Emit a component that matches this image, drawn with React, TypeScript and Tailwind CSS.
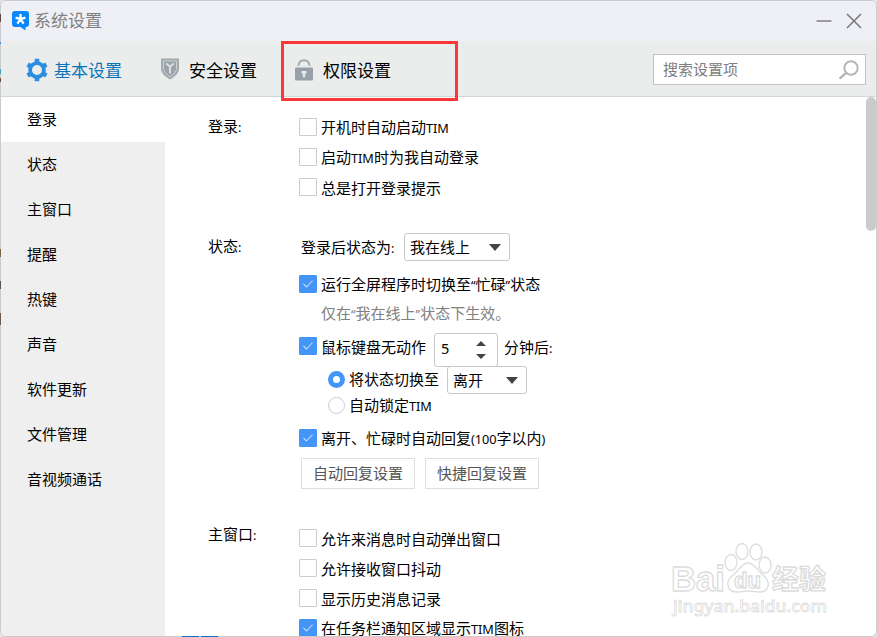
import { useState, type ReactNode } from "react";

const menu = [
  "登录",
  "状态",
  "主窗口",
  "提醒",
  "热键",
  "声音",
  "软件更新",
  "文件管理",
  "音视频通话",
];

// Latin letters, digits and quotes are set smaller than the Chinese text
function En({ children }: { children: ReactNode }) {
  return <span className="font-['Noto_Sans'] text-[12.7px]">{children}</span>;
}

function Check({
  on = false,
  children,
}: {
  on?: boolean;
  children: ReactNode;
}) {
  const [checked, setChecked] = useState(on);

  return (
    <button
      onClick={() => setChecked(!checked)}
      className="flex h-[30px] shrink-0 items-center gap-[4px] whitespace-nowrap text-left"
    >
      <span
        className={`flex h-[18px] w-[18px] items-center justify-center rounded-[1px] border ${
          checked ? "border-[#4495f8] bg-[#4495f8]" : "border-[#c8cdd4] bg-white"
        }`}
      >
        {checked && (
          <svg width="12" height="10" viewBox="0 0 12 10" fill="none">
            <path d="M1.5 5L4.5 8L10.5 1.5" stroke="#c4ddfd" strokeWidth="1.1" />
          </svg>
        )}
      </span>
      <span className="pt-[1px]">{children}</span>
    </button>
  );
}

function Select({ value, className }: { value: string; className: string }) {
  return (
    <button
      className={`flex h-[28px] shrink-0 items-center justify-between rounded-[3px] border border-[#c8c8c8] bg-white pl-[5px] ${className}`}
    >
      <span>{value}</span>
      <svg width="12" height="7" viewBox="0 0 12 7">
        <path d="M0 0H12L6 7Z" fill="#444" />
      </svg>
    </button>
  );
}

function Section({
  title,
  className,
  children,
}: {
  title: string;
  className: string;
  children: ReactNode;
}) {
  return (
    <section className="flex">
      <h3 className={`w-[91px] shrink-0 leading-[30px] ${className}`}>
        {title}
        <En>:</En>
      </h3>
      <div className="flex flex-col items-start">{children}</div>
    </section>
  );
}

export default function App() {
  const [active, setActive] = useState("登录");

  return (
    <div className="relative h-[637px] w-[877px] bg-[#e4e4e4]">
      <main className="relative flex h-[637px] w-[877px] flex-col overflow-hidden rounded-[6px] border border-[#cbcbcb] bg-white font-['Noto_Sans_CJK_SC',sans-serif] text-[15px] leading-[22px] text-black">
        <header className="flex h-[40px] shrink-0 items-center bg-[#eff0f5] pr-[14px] pl-[11px]">
          <svg width="17" height="20" viewBox="0 0 17 20">
            <path
              d="M3 0H14Q17 0 17 3V13Q17 16 14 16H13.5V19.5L8.5 16H3Q0 16 0 13V3Q0 0 3 0Z"
              fill="#0a87fb"
            />
            <path
              d="M8.5 8.2V3M8.5 8.2L3.6 6.7M8.5 8.2L13.4 6.7M8.5 8.2L5.4 12.6M8.5 8.2L11.6 12.6"
              stroke="#fff"
              strokeWidth="2.3"
            />
          </svg>
          <h1 className="-mt-[2px] ml-[5px] text-[17px] text-[#808080]">系统设置</h1>
          <div className="ml-auto flex items-center gap-[14px]">
            <svg width="16" height="16" viewBox="0 0 16 16">
              <path d="M0.5 8H15.5" stroke="#9b9b9f" strokeWidth="2" />
            </svg>
            <svg width="16" height="16" viewBox="0 0 16 16">
              <path d="M1 1L15 15M15 1L1 15" stroke="#77777a" strokeWidth="1.5" />
            </svg>
          </div>
        </header>

        <nav className="flex h-[56px] shrink-0 items-center border-b border-[#d5d6d6] bg-[#ebeded] pt-[2px] pr-[10px] pl-[25px] text-[17px]">
          <button className="flex w-[135px] items-center gap-[6px] text-[#0b73b8]">
            <svg width="22" height="24" viewBox="0 0 22 24" fill="none">
              <circle cx="11" cy="12" r="6.9" stroke="#2b8ee0" strokeWidth="3.8" />
              <path
                d="M11 0.8V4.5M11 19.5V23.2M1.6 6.6L4.6 8.3M17.4 15.7L20.4 17.4M1.6 17.4L4.6 15.7M17.4 8.3L20.4 6.6"
                stroke="#2b8ee0"
                strokeWidth="4.6"
              />
            </svg>
            基本设置
          </button>
          <button className="flex w-[133px] items-center gap-[10px]">
            <svg className="-mt-[2px]" width="18" height="22" viewBox="0 0 18 22">
              <path d="M0 0.5H18V12Q17 17 9 21.5Q1 17 0 12Z" fill="#a2aab0" />
              <path
                d="M2.5 3H15.5V11.5Q14.5 15.5 9 18.8Q3.5 15.5 2.5 11.5Z"
                fill="#9aa3aa"
                stroke="#cbd0d3"
                strokeWidth="1"
              />
              <path d="M5 5.5L9 8.5L13 5.5M9 8V15.5" stroke="#d9dddf" strokeWidth="2" fill="none" />
            </svg>
            安全设置
          </button>
          <button className="flex items-center gap-[9px]">
            <svg width="20" height="22" viewBox="0 0 20 22">
              <path
                d="M4.4 6.8Q5 1.2 10 1.2Q15 1.2 15.6 6.8"
                fill="none"
                stroke="#a5adb2"
                strokeWidth="2"
              />
              <rect x="1" y="8.5" width="18" height="13" rx="1" fill="#98a1aa" />
              <path d="M7.5 12H12.5V14.5H11.2V18.5H8.8V14.5H7.5Z" fill="#e8ebec" />
            </svg>
            权限设置
          </button>
          <label className="ml-auto flex h-[31px] w-[213px] items-center justify-between border border-[#c4c4c4] bg-white pr-[6px] pl-[9px] text-[15px]">
            <input
              placeholder="搜索设置项"
              className="-mt-[1px] w-[140px] outline-none placeholder:text-[#7d7d7d]"
            />
            <svg width="21" height="20" viewBox="0 0 21 20" fill="none">
              <circle cx="13" cy="8" r="6.7" stroke="#b5b5b5" strokeWidth="2" />
              <path d="M8.2 12.8L1.5 18.7" stroke="#b5b5b5" strokeWidth="2.4" />
            </svg>
          </label>
        </nav>

        <div className="flex min-h-0 flex-1">
          <aside className="flex w-[164px] shrink-0 flex-col bg-[#efefef]">
            {menu.map((item) => (
              <button
                key={item}
                onClick={() => setActive(item)}
                className={`h-[45px] shrink-0 pb-[2px] pl-[26px] text-left ${
                  active === item ? "bg-white" : ""
                }`}
              >
                {item}
              </button>
            ))}
          </aside>

          <div className="flex min-w-0 flex-1 flex-col overflow-hidden pt-[15px] pl-[43px]">
            <Section title="登录" className="-mt-[1px]">
              <Check>
                开机时自动启动<En>TIM</En>
              </Check>
              <Check>
                启动<En>TIM</En>时为我自动登录
              </Check>
              <Check>总是打开登录提示</Check>
            </Section>

            <div className="mt-[31px]">
              <Section title="状态" className="-mt-[2px]">
                <div className="flex items-center pl-[2px]">
                  <span className="w-[103px]">
                    登录后状态为<En>:</En>
                  </span>
                  <Select value="我在线上" className="w-[106px] pr-[8px]" />
                </div>
                <div className="mt-[8px]">
                  <Check on>
                    运行全屏程序时切换至<En>“</En>忙碌<En>”</En>状态
                  </Check>
                </div>
                <p className="h-[30px] pl-[22px] leading-[28px] text-[#808080]">
                  仅在<En>“</En>我在线上<En>”</En>状态下生效。
                </p>
                <div className="mt-[4px] flex h-[33px] items-start">
                  <div className="-mt-[2px] w-[135px]">
                    <Check on>鼠标键盘无动作</Check>
                  </div>
                  <div className="flex h-[34px] w-[64px] items-center justify-between rounded-[3px] border border-[#c8c8c8] pr-[11px] pl-[6px]">
                    <span className="-mt-[4px] font-['Noto_Sans'] text-[14.5px]">5</span>
                    <svg width="10" height="20" viewBox="0 0 10 20" fill="#444">
                      <path d="M0 6L5 1L10 6ZM0 14H10L5 19Z" />
                    </svg>
                  </div>
                  <span className="ml-[6px] leading-[27px]">
                    分钟后<En>:</En>
                  </span>
                </div>
                <div className="flex h-[28px] items-center pl-[29px]">
                  <span className="-mt-[2px] h-[17px] w-[17px] rounded-full border-[5px] border-[#4495f8] bg-white" />
                  <span className="-mt-[2px] ml-[4px] w-[98px]">将状态切换至</span>
                  <Select value="离开" className="w-[80px] pr-[8px]" />
                </div>
                <div className="flex h-[23px] items-center pl-[29px]">
                  <span className="h-[17px] w-[17px] rounded-full border border-[#c8cdd4] bg-white" />
                  <span className="ml-[4px]">
                    自动锁定<En>TIM</En>
                  </span>
                </div>
                <div className="mt-[6px]">
                  <Check on>
                    离开、忙碌时自动回复<En>(100</En>字以内<En>)</En>
                  </Check>
                </div>
                <div className="mt-[5px] flex gap-[10px] pl-[2px] text-[#555]">
                  <button className="h-[31px] w-[114px] border border-[#dedede] pb-[2px]">
                    自动回复设置
                  </button>
                  <button className="h-[31px] w-[114px] border border-[#dedede] pb-[2px]">
                    快捷回复设置
                  </button>
                </div>
              </Section>
            </div>

            <div className="mt-[34px]">
              <Section title="主窗口" className="-mt-[4px]">
                <Check>允许来消息时自动弹出窗口</Check>
                <Check>允许接收窗口抖动</Check>
                <Check>显示历史消息记录</Check>
                <Check on>
                  在任务栏通知区域显示<En>TIM</En>图标
                </Check>
              </Section>
            </div>
          </div>

          <div className="w-[10px] shrink-0">
            <div className="h-[134px] rounded-[5px] bg-[#cbcbcb]" />
          </div>
        </div>

        {/* highlighted tab */}
        <div className="absolute top-[40px] left-[280px] h-[60px] w-[177px] border-3 border-[#fb3838]" />

        {/* watermark */}
        <svg
          className="pointer-events-none absolute top-[538px] left-[666px]"
          width="170"
          height="84"
          viewBox="0 0 170 84"
          fill="#fff"
          stroke="#dcdcdc"
          strokeWidth="1.3"
        >
          <text
            x="4"
            y="52"
            fontFamily="Liberation Sans"
            fontWeight="700"
            fontSize="35"
            textLength="54"
            lengthAdjust="spacingAndGlyphs"
          >
            Bai
          </text>
          <ellipse cx="64" cy="23.5" rx="6" ry="8" />
          <ellipse cx="75" cy="12.5" rx="6" ry="8" />
          <ellipse cx="89" cy="13" rx="6" ry="8" />
          <ellipse cx="98" cy="26" rx="6" ry="8" />
          <path d="M81 24C88 24 90 32 97 37C104 43 102 53 93 53C88 53 85 52 81 52C77 52 75 53 70 53C60 53 58 43 65 37C72 32 74 24 81 24Z" />
          <text
            x="67"
            y="49"
            fontFamily="Liberation Sans"
            fontWeight="700"
            fontSize="22"
            textLength="27"
            lengthAdjust="spacingAndGlyphs"
          >
            du
          </text>
          <text
            x="105"
            y="50"
            fontFamily="Noto Sans CJK SC"
            fontWeight="700"
            fontSize="27"
            textLength="54"
            lengthAdjust="spacingAndGlyphs"
          >
            经验
          </text>
          <text
            x="6"
            y="73"
            fontFamily="Noto Sans"
            fontWeight="500"
            fontSize="17"
            textLength="154"
            lengthAdjust="spacingAndGlyphs"
            strokeWidth="0.8"
          >
            jingyan.baidu.com
          </text>
        </svg>
      </main>

      {/* slivers of the desktop around the window */}
      <div className="absolute bottom-0 left-[182px] flex gap-[2px]">
        <span className="h-[1px] w-[17px] bg-[#0d6fc0]" />
        <span className="h-[1px] w-[17px] bg-[#0d6fc0]" />
      </div>
      <div className="absolute top-[14px] left-0 flex w-[1px] flex-col">
        <span className="h-[8px] bg-[#5a4a48]" />
        <span className="mt-[20px] h-[2px] bg-[#3b8df0]" />
        <span className="mt-[25px] h-[5px] bg-[#3fa0b8]" />
        <span className="mt-[4px] h-[4px] bg-[#6b4a35]" />
        <span className="mt-[167px] h-[8px] bg-[#7a6240]" />
        <span className="mt-[24px] h-[8px] bg-[#555]" />
        <span className="mt-[24px] h-[12px] bg-[#6a5a4a]" />
      </div>
    </div>
  );
}
